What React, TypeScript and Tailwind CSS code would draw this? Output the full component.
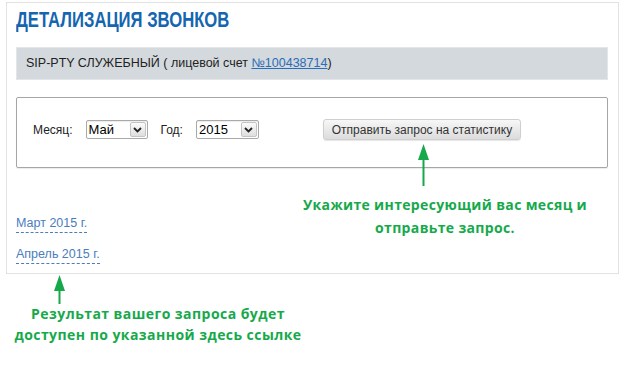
import React from "react";

function Chevron() {
  return (
    <svg width="9" height="6" viewBox="0 0 9 6">
      <path d="M1 1 L4.5 4.5 L8 1" fill="none" stroke="#222" strokeWidth="1.8" />
    </svg>
  );
}

function FakeSelect({ value, width }: { value: string; width: string }) {
  return (
    <div
      className={`${width} h-[19px] flex items-center justify-between bg-white border border-[#a9a9a9] rounded-[2px] pl-[2px] pr-[1px] shadow-[inset_0_1px_1px_rgba(0,0,0,0.08)]`}
    >
      <span className="text-[13px] leading-none text-black">{value}</span>
      <div className="w-[16px] h-[15px] flex items-center justify-center rounded-[2px] border border-[#c4c4c4] bg-gradient-to-b from-[#fbfbfb] to-[#dedede]">
        <Chevron />
      </div>
    </div>
  );
}

function UpArrow({ h }: { h: number }) {
  return (
    <svg width="13" height={h} viewBox={`0 0 13 ${h}`}>
      <polygon points={`6.5,0 12,16 1,16`} fill="#16a94b" />
      <rect x="5.5" y="14" width="2" height={h - 14} fill="#16a94b" />
    </svg>
  );
}

export default function App() {
  return (
    <div
      className="relative w-[623px] h-[366px] bg-white overflow-hidden"
      style={{ fontFamily: '"Liberation Sans", Arial, sans-serif' }}
    >
      <div className="ml-[6px] mt-[2px] w-[613px] h-[272px] border border-[#e2e2e2] px-[9px] pt-[4px]">
        <h1
          className="text-[22.5px] leading-[26px] font-bold text-[#1565b0] whitespace-nowrap origin-left scale-x-[0.74]"
          style={{ fontFamily: '"Liberation Sans", Arial, sans-serif' }}
        >
          ДЕТАЛИЗАЦИЯ ЗВОНКОВ
        </h1>
        <div className="mt-[14px] w-[592px] h-[33px] flex items-center px-[9px] bg-[#d4d9dd] border border-[#e3e6e8] text-[12.5px] text-[#222]">
          <span>
            SIP-PTY СЛУЖЕБНЫЙ ( лицевой счет{" "}
            <span className="text-[#2a6db8] underline">№100438714</span>)
          </span>
        </div>
        <div className="mt-[17px] w-[592px] h-[71px] border border-[#a6a6a6] rounded-[2px] shadow-[0_1px_1px_rgba(0,0,0,0.08)] flex items-center pl-[16px] pb-[6px] text-[12px] text-[#222]">
          <span className="mr-[13px]">Месяц:</span>
          <FakeSelect value="Май" width="w-[62px]" />
          <span className="ml-[13px] mr-[13px]">Год:</span>
          <FakeSelect value="2015" width="w-[63px]" />
          <button className="ml-[64px] w-[198px] h-[21px] rounded-[3px] border border-[#cfcfcf] bg-gradient-to-b from-[#f7f7f7] to-[#dcdcdc] text-[12px] text-[#333] shadow-[0_1px_1px_rgba(0,0,0,0.1)]">
            Отправить запрос на статистику
          </button>
        </div>
        <div className="mt-[47px] flex flex-col items-start gap-[13px] text-[12.5px] leading-[17px] text-[#4a7dbd]">
          <span className="border-b border-dashed border-[#4a7dbd]">Март 2015 г.</span>
          <span className="border-b border-dashed border-[#4a7dbd]">Апрель 2015 г.</span>
        </div>
      </div>

      <div className="absolute left-[417px] top-[144px]">
        <UpArrow h={42} />
      </div>
      <div
        className="absolute left-[285px] top-[193px] w-[320px] text-center text-[14px] leading-[23px] font-bold tracking-[0.35px] text-[#16a94b]"
        style={{ fontFamily: '"Open Sans", sans-serif' }}
      >
        Укажите интересующий вас месяц и
        <br />
        отправьте запрос.
      </div>

      <div className="absolute left-[53px] top-[275px]">
        <UpArrow h={29} />
      </div>
      <div
        className="absolute left-[-2px] top-[303px] w-[320px] text-center text-[14px] leading-[21px] font-bold tracking-[0.45px] text-[#16a94b]"
        style={{ fontFamily: '"Open Sans", sans-serif' }}
      >
        Результат вашего запроса будет
        <br />
        доступен по указанной здесь ссылке
      </div>
    </div>
  );
}
